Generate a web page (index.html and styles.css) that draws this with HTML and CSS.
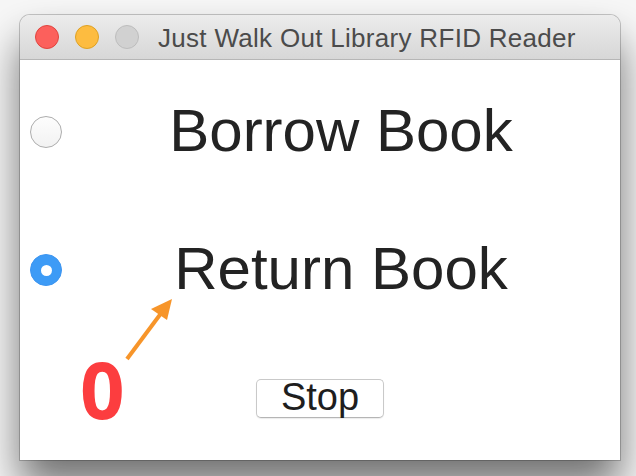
FILE: index.html
```html
<!DOCTYPE html>
<html lang="en">
<head>
<meta charset="utf-8">
<title>Just Walk Out Library RFID Reader</title>
<link rel="stylesheet" href="styles.css">
</head>
<body>
<div class="window">
  <div class="titlebar">
    <span class="light red"></span>
    <span class="light yellow"></span>
    <span class="light gray"></span>
    <span class="title">Just Walk Out Library RFID Reader</span>
  </div>
  <div class="content">
    <div class="row row-first">
      <span class="radio"></span>
      <span class="label">Borrow Book</span>
    </div>
    <div class="row row-second">
      <span class="radio checked"></span>
      <span class="label">Return Book</span>
    </div>
    <div class="actions">
      <button class="stop">Stop</button>
    </div>
  </div>
</div>
<svg class="arrow" width="70" height="80" viewBox="0 0 70 80">
  <line x1="7" y1="78" x2="42" y2="31" stroke="#f7952a" stroke-width="4"/>
  <polygon points="52,18 31,28 47,39" fill="#f7952a"/>
</svg>
<div class="count">0</div>
</body>
</html>
```
FILE: styles.css
```css
html, body {
  margin: 0;
  padding: 0;
}
body {
  width: 636px;
  height: 476px;
  overflow: hidden;
  background: #f7f7f7;
  position: relative;
  font-family: "Liberation Sans", Arial, sans-serif;
  padding: 15px 0 0 20px;
  box-sizing: border-box;
}
.window {
  width: 600px;
  height: 445px;
  border-radius: 10px 10px 0 0;
  box-shadow: 0 26px 42px rgba(0,0,0,0.55), 0 0 0 1px rgba(0,0,0,0.2);
  display: flex;
  flex-direction: column;
  background: #fff;
}
.titlebar {
  height: 44px;
  flex: none;
  display: flex;
  align-items: center;
  padding-left: 15px;
  gap: 16px;
  background: linear-gradient(#ececec, #d7d7d7);
  border-bottom: 1px solid #b6b6b6;
  border-radius: 10px 10px 0 0;
}
.light {
  width: 22px;
  height: 22px;
  border-radius: 50%;
  flex: none;
}
.red { background: #fc605c; border: 1px solid #e0443e; }
.yellow { background: #fdbc40; border: 1px solid #dea123; }
.gray { background: #d1d1d1; border: 1px solid #bdbdbd; }
.title {
  margin-left: 3px;
  font-size: 26px;
  letter-spacing: 0.3px;
  color: #4b4b4b;
  padding-top: 2px;
}
.content {
  flex: 1;
  display: flex;
  flex-direction: column;
}
.row {
  height: 60px;
  display: flex;
  align-items: center;
  padding-left: 10px;
}
.row-first { margin-top: 41px; }
.row-second { margin-top: 78px; }
.radio {
  width: 30px;
  height: 30px;
  border-radius: 50%;
  border: 1px solid #adadad;
  background: linear-gradient(#fdfdfd, #f2f2f2);
  flex: none;
  display: flex;
  align-items: center;
  justify-content: center;
  margin-top: 2px;
}
.radio.checked {
  background: #3d9bf6;
  border-color: #3d95f0;
}
.radio.checked::after {
  content: "";
  width: 11px;
  height: 11px;
  border-radius: 50%;
  background: #fff;
}
.label {
  flex: 1;
  text-align: center;
  font-size: 60px;
  line-height: 60px;
  color: #232323;
}
.actions {
  margin-top: 80px;
  display: flex;
  justify-content: center;
}
.stop {
  width: 128px;
  height: 39px;
  border: 1px solid #c9c9c9;
  border-bottom-color: #b5b5b5;
  border-radius: 5px;
  background: #fff;
  font-family: "Liberation Sans", Arial, sans-serif;
  font-size: 38px;
  line-height: 35px;
  padding: 0 0 2px;
  color: #1e1e1e;
  box-shadow: 0 1px 1px rgba(0,0,0,0.08);
}
.arrow {
  position: absolute;
  left: 120px;
  top: 281px;
}
.count {
  position: absolute;
  left: 80px;
  top: 349px;
  font-family: "Open Sans", "Liberation Sans", sans-serif;
  font-weight: 700;
  font-size: 78px;
  line-height: 80px;
  color: #fc3d3f;
}
```
